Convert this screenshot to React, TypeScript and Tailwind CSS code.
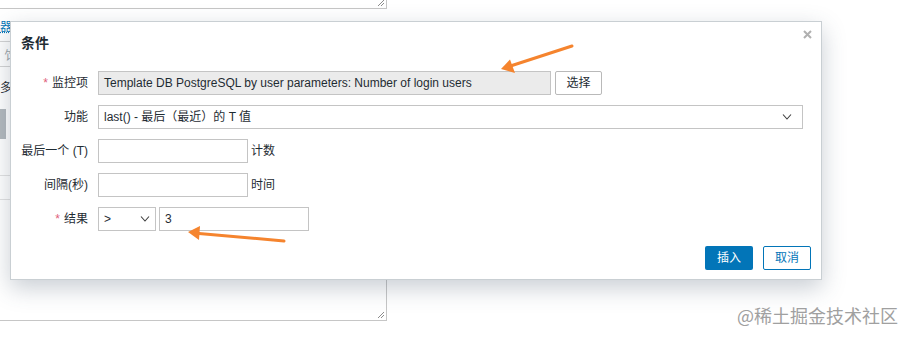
import React from "react";

const font = "font-['Liberation_Sans','Noto_Sans_CJK_SC',Arial,sans-serif]";

function Grip() {
  return (
    <svg className="absolute right-[1px] bottom-[1px]" width="9" height="9" viewBox="0 0 9 9">
      <path d="M8 2 L2 8 M8 5 L5 8" stroke="#8c8c8c" strokeWidth="1" />
    </svg>
  );
}

function Chevron() {
  return (
    <svg width="10" height="6" viewBox="0 0 10 6">
      <path d="M1 0.5 L5 5 L9 0.5" fill="none" stroke="#3d3d3d" strokeWidth="1.1" />
    </svg>
  );
}

function Row({ label, required, children }: { label: string; required?: boolean; children: React.ReactNode }) {
  return (
    <div className="flex items-center h-[24px]">
      <div className="w-[67px] shrink-0 text-right whitespace-nowrap text-[12px] text-[#1f2c33]">
        {required && <span className="text-[#e0607a] mr-[4px]">*</span>}
        {label}
      </div>
      <div className="ml-[10px] flex items-center h-full">{children}</div>
    </div>
  );
}

export default function App() {
  return (
    <div className={`relative w-[911px] h-[338px] bg-white overflow-hidden ${font}`}>
      {/* page behind the dialog */}
      <div className="w-[387px] flex flex-col">
        <div className="relative h-[9px] border-r border-b border-[#c6c6c6]">
          <Grip />
        </div>
        <div className="h-[200px] w-[40px] flex flex-col text-[12px] overflow-hidden">
          <div className="mt-[9px] text-[#0275b8] underline decoration-dotted">器</div>
          <div className="mt-[5px] border-t border-[#d4d4d4]" />
          <div className="mt-[5px] ml-[4px] text-[#9aa4aa]">饣</div>
          <div className="mt-[1px] border-t border-[#d4d4d4]" />
          <div className="mt-[12px] text-[#1f2c33]">多重</div>
          <div className="mt-[12px] w-[6px] h-[30px] bg-[#b3b9bd]" />
          <div className="mt-[36px] border-t border-[#e2e2e2]" />
          <div className="mt-[23px] border-t border-[#e2e2e2]" />
        </div>
        <div className="relative h-[112px] border-r border-b border-[#c6c6c6]">
          <Grip />
        </div>
      </div>

      {/* dialog */}
      <div className="absolute left-[10px] top-[21px] w-[812px] border border-[#c9cfd3] bg-white shadow-[0_8px_22px_rgba(60,80,100,0.28)]">
        <div className="relative h-[40px] px-[10px] pt-[11px]">
          <div className="text-[14px] leading-[20px] font-bold text-[#1f2c33]">条件</div>
          <svg className="absolute right-[9px] top-[8px]" width="9" height="9" viewBox="0 0 9 9">
            <path d="M1 1 L8 8 M8 1 L1 8" stroke="#b0b0b0" strokeWidth="2" />
          </svg>
        </div>
        <div className="mt-[9px] px-[10px] flex flex-col gap-[10px] text-[12px] text-[#1f2c33]">
          <Row label="监控项" required>
            <div className="w-[453px] h-full border border-[#c4c4c4] bg-[#ebebeb] px-[5px] flex items-center whitespace-nowrap overflow-hidden">
              Template DB PostgreSQL by user parameters: Number of login users
            </div>
            <button className="ml-[4px] w-[47px] h-full border border-[#b9b9b9] bg-white rounded-[2px] text-[12px] text-[#1f2c33]">
              选择
            </button>
          </Row>
          <Row label="功能">
            <div className="w-[705px] h-full border border-[#c4c4c4] bg-white pl-[5px] pr-[10px] flex items-center justify-between">
              <span>last() - 最后（最近）的 T 值</span>
              <Chevron />
            </div>
          </Row>
          <Row label="最后一个 (T)">
            <div className="w-[150px] h-full border border-[#c4c4c4] bg-white" />
            <span className="ml-[3px]">计数</span>
          </Row>
          <Row label="间隔(秒)">
            <div className="w-[150px] h-full border border-[#c4c4c4] bg-white" />
            <span className="ml-[3px]">时间</span>
          </Row>
          <Row label="结果" required>
            <div className="w-[58px] h-full border border-[#c4c4c4] bg-white pl-[5px] pr-[5px] flex items-center justify-between">
              <span>&gt;</span>
              <Chevron />
            </div>
            <div className="ml-[3px] w-[150px] h-full border border-[#c4c4c4] bg-white px-[5px] flex items-center">3</div>
          </Row>
        </div>
        <div className="mt-[15px] mb-[9px] px-[10px] flex justify-end gap-[10px] text-[12px]">
          <button className="w-[48px] h-[24px] rounded-[2px] bg-[#0275b8] text-white">插入</button>
          <button className="w-[48px] h-[24px] rounded-[2px] border border-[#0275b8] bg-white text-[#0275b8]">取消</button>
        </div>
      </div>

      {/* annotation arrows */}
      <svg className="absolute inset-0 pointer-events-none" width="911" height="338" viewBox="0 0 911 338">
        <line x1="572" y1="46" x2="512" y2="65.5" stroke="#f5842e" strokeWidth="3" strokeLinecap="round" />
        <polygon points="501,69 510,59.5 515,73" fill="#f5842e" />
        <line x1="284" y1="241" x2="199" y2="233.5" stroke="#f5842e" strokeWidth="3" strokeLinecap="round" />
        <polygon points="188,232 200,226 199,240" fill="#f5842e" />
      </svg>

      {/* watermark */}
      <div className="absolute left-[737px] top-[304px] text-[18px] leading-[22px] text-[#a0a0a0] whitespace-nowrap font-['Noto_Sans_CJK_SC',sans-serif]">
        @稀土掘金技术社区
      </div>
    </div>
  );
}
